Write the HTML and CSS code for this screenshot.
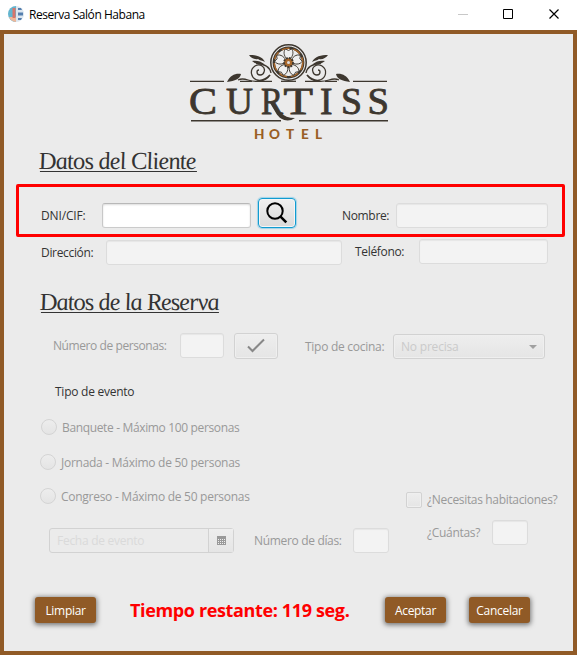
FILE: index.html
```html
<!DOCTYPE html>
<html lang="es">
<head>
<meta charset="utf-8">
<title>Reserva Salón Habana</title>
<link rel="stylesheet" href="styles.css">
</head>
<body>
<div class="window">
  <header class="titlebar">
    <svg class="app-icon" width="16" height="16" viewBox="0 0 16 16">
      <path d="M8 0a8 8 0 0 0 0 16z" fill="#63b5cf"/>
      <path d="M1 11a8 8 0 0 0 7 5v-5z" fill="#efb79a"/>
      <path d="M4.500 2h3v10h-3z" fill="#d9756b"/>
      <path d="M8 0a8 8 0 0 1 0 16z" fill="#dce6ef"/>
      <path d="M10 2h3l1 2h-4zM10 6.500h5v3h-5zM10 12h4l-1 2h-3z" fill="#557fae"/>
    </svg>
    <span class="window-title">Reserva Salón Habana</span>
    <svg class="window-controls" width="120" height="30" viewBox="0 0 120 30" fill="none" stroke="#000">
      <path d="M1 14.500h10" stroke="#c8c8c8"/>
      <path d="M46.500 9.500h9v9h-9z"/>
      <path d="M92.500 9.500l9 9m0-9l-9 9" stroke-width="1.200"/>
    </svg>
  </header>

  <main class="content">
    <svg class="logo" width="204" height="104" viewBox="186 40 204 104">
      <defs>
        <g id="scroll" fill="none" stroke="#3d372f" stroke-width="1.300">
          <path d="M270 75c-4 4-9 6-13 5-6-2-8-10-2-14 5-3 11 1 9 6-1 4-7 4-7 0 0-1 1-2 2-2"/>
          <path d="M271 73c-1-6-6-9-15-10"/>
          <path d="M238 80c4-2 7-1 10 0 6 2 17 3 22-5"/>
          <path d="M227 82c3-7 9-9 14-8-1 5-6 7-14 8z" fill="#3d372f" stroke="none"/>
          <path d="M249 55c7 0 13 1 16 7-3-2-5-1-7-3-3 1-7-1-9-4z" fill="#3d372f" stroke="none"/>
          <path d="M252 61c4-1 9 0 12 3-5 1-8 0-12-3z" fill="#3d372f" stroke="none"/>
          <path d="M190 81.300h34M240 81.300h12M259 81.300h13"/>
        </g>
        <path id="petal" d="M288.500 60c-4-2-6-8-3-11l3 1.500 3-1.500c3 3 1 9-3 11z"/>
      </defs>
      <use href="#scroll"/>
      <use href="#scroll" transform="translate(577 0) scale(-1 1)"/>
      <path d="M281 81.300h15" stroke="#3d372f" stroke-width="1.300"/>
      <circle cx="288.500" cy="62.500" r="17.700" fill="#ebebeb" stroke="#3d372f" stroke-width="1.500"/>
      <circle cx="288.500" cy="62.500" r="14.700" fill="none" stroke="#3d372f" stroke-width="2.400"/>
      <circle cx="288.500" cy="62.500" r="14.300" fill="none" stroke="#a9682b" stroke-width="1.500" stroke-dasharray="8 4"/>
      <g fill="#efefef" stroke="#3d372f" stroke-width=".9">
        <use href="#petal"/>
        <use href="#petal" transform="rotate(72 288.500 62.500)"/>
        <use href="#petal" transform="rotate(144 288.500 62.500)"/>
        <use href="#petal" transform="rotate(216 288.500 62.500)"/>
        <use href="#petal" transform="rotate(288 288.500 62.500)"/>
      </g>
      <circle cx="288.500" cy="62.500" r="4.500" fill="#a9682b" stroke="#3d372f" stroke-width="1.800" stroke-dasharray="2 1"/>
      <circle cx="288.500" cy="62.500" r="1.500" fill="#ddd"/>
      <g class="logo-name">
        <text x="189" y="114" textLength="28" lengthAdjust="spacingAndGlyphs">C</text>
        <text x="226" y="114" textLength="27" lengthAdjust="spacingAndGlyphs">U</text>
        <text x="261" y="114" textLength="22" lengthAdjust="spacingAndGlyphs">R</text>
        <text x="283.500" y="114" textLength="29.500" lengthAdjust="spacingAndGlyphs">T</text>
        <text x="320" y="114">I</text>
        <text x="341" y="114" textLength="21" lengthAdjust="spacingAndGlyphs">S</text>
        <text x="367.500" y="114" textLength="21.500" lengthAdjust="spacingAndGlyphs">S</text>
      </g>
      <path d="M272 102c6 8 10 16 23 16-7 5-15 2-19-5l-6-10z" fill="#3d372f"/>
      <path d="M191 120.800h90M299 120.800h89" stroke="#3d372f" stroke-width="1.500"/>
      <text class="logo-sub" x="254 269 286 301 315" y="139">HOTEL</text>
    </svg>

    <h2 class="section-title client-title"><span>Datos del Cliente</span></h2>

    <div class="row id-row">
      <label class="dni">DNI/CIF:</label>
      <div class="field active dni-field"></div>
      <div class="search-button">
        <svg width="22" height="22" viewBox="0 0 22 22" fill="none" stroke="#000"><circle cx="9" cy="9" r="7.700" stroke-width="2"/><path d="M14.300 14.300l6 6" stroke-width="2.600"/></svg>
      </div>
      <label class="nombre">Nombre:</label>
      <div class="field nombre-field"></div>
    </div>

    <div class="row address-row">
      <label class="direccion">Dirección:</label>
      <div class="field direccion-field"></div>
      <label class="telefono">Teléfono:</label>
      <div class="field telefono-field"></div>
    </div>

    <h2 class="section-title booking-title"><span>Datos de la Reserva</span></h2>

    <div class="row people-row disabled">
      <label class="personas">Número de personas:</label>
      <div class="field personas-field"></div>
      <div class="box check-button"><svg width="20" height="16" viewBox="0 0 20 16"><path d="M2 8.500l4.500 4.500L18 1.500" fill="none" stroke="#888" stroke-width="2"/></svg></div>
      <label class="cocina">Tipo de cocina:</label>
      <div class="box combo"><span class="combo-text">No precisa</span><i class="arrow"></i></div>
    </div>

    <div class="event">
      <section class="event-left">
        <p class="event-title">Tipo de evento</p>
        <div class="radio banquete"><i></i><span>Banquete - Máximo 100 personas</span></div>
        <div class="radio jornada"><i></i><span>Jornada - Máximo de 50 personas</span></div>
        <div class="radio congreso"><i></i><span>Congreso - Máximo de 50 personas</span></div>
        <div class="row date-row disabled">
          <div class="date-field">
            <span class="placeholder">Fecha de evento</span>
            <div class="calendar"><svg width="9" height="9" viewBox="0 0 9 9"><path d="M0 0h9v9H0z" fill="#999"/><path d="M1 3.500h7M1 5.500h7M1 7.500h7" stroke="#eee" stroke-dasharray="1 1"/></svg></div>
          </div>
          <label class="dias">Número de días:</label>
          <div class="field small-field"></div>
        </div>
      </section>
      <section class="event-right disabled">
        <div class="row"><i class="box checkbox"></i><label class="habitaciones">¿Necesitas habitaciones?</label></div>
        <div class="row rooms-row"><label class="cuantas">¿Cuántas?</label><div class="field small-field"></div></div>
      </section>
    </div>

    <footer class="actions">
      <button>Limpiar</button>
      <strong class="timer">Tiempo restante: 119 seg.</strong>
      <button>Aceptar</button>
      <button class="cancel">Cancelar</button>
    </footer>
  </main>
</div>
</body>
</html>
```
FILE: styles.css
```css
* { box-sizing: border-box; }
body { margin: 0; font-family: "Segoe UI", "Open Sans", sans-serif; font-size: 12px; color: #333; }
.window { width: 577px; height: 655px; display: flex; flex-direction: column; background: #fff; }
.titlebar { height: 30px; flex: none; display: flex; align-items: center; padding-left: 8px; color: #000; }
.app-icon { margin-top: -2px; }
.window-title { margin: -2px auto 0 5px; font-size: 12px; letter-spacing: -0.45px; }
.content { flex: 1; border: 4px solid #905a26; background: #ebebeb; display: flex; flex-direction: column; }
.logo { margin: 6px 0 0 182px; flex: none; }
.logo-name { font: 37.500px "Liberation Serif", serif; fill: #3d372f; stroke: #3d372f; stroke-width: .8px; }
.logo-sub { font: 900 13.500px Lato, sans-serif; fill: #9a5f25; }

.section-title { margin: 0; height: 24px; font: italic 24.500px/26px Gabriola, "Liberation Serif", serif; color: #333; white-space: nowrap; }
.section-title span { display: inline-block; height: 24px; border-bottom: 1px solid #333; transform: skewX(8deg); transform-origin: left bottom; }
.client-title { margin: 4px 0 0 36px; }
.client-title span { width: 157px; letter-spacing: -0.85px; }
.booking-title { margin: 24px 0 0 37px; }
.booking-title span { width: 178px; letter-spacing: -1px; }

.row { display: flex; align-items: flex-start; }
label { height: 25px; line-height: 25px; white-space: nowrap; flex: none; letter-spacing: -0.33px; }
.field { height: 25px; flex: none; border: 1px solid #dcdcdc; border-radius: 3px; background: #f3f3f3; box-shadow: inset 0 1px 1px #e6e6e6; }
.field.active { background: #fff; border-color: #b8b8b8 #c8c8c8 #cbcbcb; box-shadow: inset 0 1px 2px #ddd; }
.disabled label, .radio { color: #999; }
.box { flex: none; border: 1px solid #d2d2d2; border-radius: 3px; background: linear-gradient(#eee, #e5e5e5); box-shadow: inset 0 0 0 1px #efefef; }

.id-row { width: 549px; height: 53px; margin: 12px 0 0 12px; padding: 16px 0 0 22px; border: 3px solid #f00; border-radius: 2px; flex: none; }
.dni { width: 61px; letter-spacing: -0.15px; }
.dni-field { width: 149px; }
.search-button { width: 38px; height: 30px; margin: -5px -1px 0 7px; flex: none; display: flex; align-items: center; justify-content: center; border: 1.500px solid #119bd0; border-radius: 4px; background: linear-gradient(#efefef, #dadada); box-shadow: 0 0 1px 1px #9fd3e8, inset 0 0 0 1px #f5f5f5; }
.nombre { width: 54px; margin-left: 47px; }
.nombre-field { width: 152px; }

.address-row { margin: 3px 0 0 37px; height: 25px; }
.direccion { width: 65px; }
.direccion-field { width: 236px; }
.telefono { width: 64px; margin: -1px 0 0 13px; }
.telefono-field { width: 129px; margin-top: -1px; }

.people-row { margin: 20px 0 0 49px; height: 26px; }
.personas { width: 127px; letter-spacing: -0.42px; }
.personas-field { width: 44px; }
.check-button { width: 44px; height: 26px; margin-left: 10px; display: flex; align-items: center; justify-content: center; }
.cocina { width: 88px; margin: 1px 0 0 27px; letter-spacing: -0.27px; }
.combo { width: 152px; height: 25px; margin-top: 1px; padding: 0 7px; display: flex; align-items: center; justify-content: space-between; color: #cacaca; }
.combo-text { letter-spacing: -0.2px; }
.arrow { border: 4px solid transparent; border-top-color: #a0a0a0; border-bottom: 0; }

.event { display: flex; height: 194px; margin-top: 20px; flex: none; }
.event-left { width: 402px; }
.event-title { margin: 0 0 0 51px; height: 26px; line-height: 26px; letter-spacing: -0.25px; }
.radio { display: flex; align-items: center; height: 16px; white-space: nowrap; letter-spacing: -0.27px; }
.radio i { width: 16px; height: 16px; border: 1px solid #d4d4d4; border-radius: 50%; background: linear-gradient(#ededed, #e4e4e4); margin-right: 5px; }
.banquete { margin: 14px 0 0 37px; letter-spacing: -0.35px; }
.jornada { margin: 19px 0 0 36px; }
.congreso { margin: 18px 0 0 36px; }
.date-row { margin: 24px 0 0 45px; }
.date-field { width: 185px; height: 25px; display: flex; border: 1px solid #d2d2d2; border-radius: 3px; }
.placeholder { flex: 1; padding-left: 7px; line-height: 23px; color: #dadada; letter-spacing: -0.27px; }
.calendar { width: 25px; border-left: 1px solid #d2d2d2; background: linear-gradient(#eee, #e5e5e5); display: flex; align-items: center; justify-content: center; }
.dias { width: 99px; margin-left: 20px; }
.small-field { width: 36px; }
.event-right { padding-top: 113px; }
.checkbox { width: 16px; height: 16px; border-radius: 2px; }
.habitaciones { height: 16px; line-height: 16px; margin-left: 5px; }
.rooms-row { margin: 12px 0 0 21px; }
.cuantas { width: 65px; }

.actions { display: flex; margin: 24px 0 0 31px; height: 26px; align-items: center; }
button { width: 61px; height: 26px; padding: 0; border: 0; border-radius: 3px; background: #905a26; color: #fff; font: inherit; letter-spacing: -0.3px; box-shadow: 0 1px 5px 1px rgba(0,0,0,.5); }
.timer { width: 255px; margin-left: 34px; color: #f00; font-size: 18px; white-space: nowrap; letter-spacing: -0.36px; }
.cancel { margin-left: 23px; }
```
